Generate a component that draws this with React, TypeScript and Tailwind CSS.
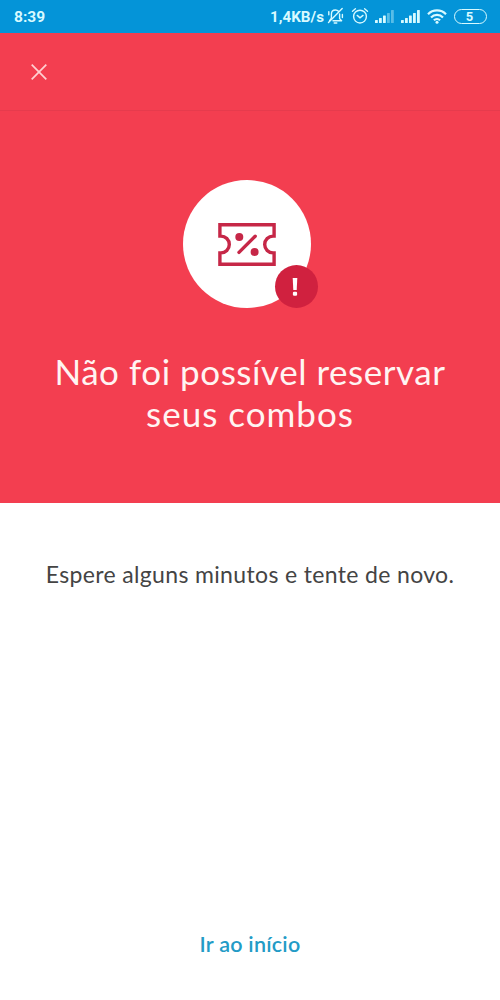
import type { ReactNode } from "react";

const signalBars = [
  { x: 0, height: 3 },
  { x: 4, height: 5 },
  { x: 8, height: 7.5 },
  { x: 12, height: 10 },
  { x: 16, height: 13 },
];

function BellOffIcon() {
  return (
    <svg
      viewBox="0 0 17 18"
      className="h-[18px] w-[17px]"
      fill="none"
      stroke="currentColor"
      strokeWidth="1.4"
      strokeLinecap="round"
      strokeLinejoin="round"
    >
      <path d="M4.4 11V7.2C4.4 4.6 6 3 8.4 3c1.3 0 2.4.5 3.1 1.3M12.6 7v4.6l2 2.2H6M2.6 13.6l1.8-2.4M7.2 16h2.6" />
      <path d="M15.2 1.6 1.5 15.4M1.8 4.6v3.2M15.4 7.5v3" />
    </svg>
  );
}

function AlarmIcon() {
  return (
    <svg
      viewBox="0 0 18 18"
      className="h-[18px] w-[18px]"
      fill="none"
      stroke="currentColor"
      strokeWidth="1.4"
      strokeLinecap="round"
    >
      <circle cx="9" cy="9.6" r="6.4" />
      <path d="M1.5 4.2 4.4 1.8M16.5 4.2l-2.9-2.4M6.2 8.4 9 10.8l3-2.4" />
    </svg>
  );
}

function SignalIcon({ strength }: { strength: number }) {
  return (
    <svg viewBox="0 0 19 13" className="h-[13px] w-[19px]" fill="currentColor">
      {signalBars.map((bar, index) => (
        <rect
          key={bar.x}
          x={bar.x}
          y={13 - bar.height}
          width="2.8"
          height={bar.height}
          rx="0.5"
          opacity={index < strength ? 1 : 0.4}
        />
      ))}
    </svg>
  );
}

function WifiIcon() {
  return (
    <svg
      viewBox="0 0 20 15"
      className="h-[15px] w-[20px]"
      fill="none"
      stroke="currentColor"
      strokeWidth="2.2"
    >
      <path d="M1 5.2a12.6 12.6 0 0 1 18 0M4 8.4a8.4 8.4 0 0 1 12 0M6.9 11.3a4.4 4.4 0 0 1 6.2 0" />
      <circle cx="10" cy="13.2" r="1.5" fill="currentColor" stroke="none" />
    </svg>
  );
}

function TicketIcon() {
  return (
    <svg
      viewBox="0 0 58 43"
      className="h-[43px] w-[58px]"
      fill="none"
      stroke="#c62747"
      strokeWidth="3.4"
    >
      <path d="M1.9 1.7h54.2v11.4h-1a8.4 8.4 0 0 0 0 16.8h1v11.4H1.9V29.9h1a8.4 8.4 0 0 0 0-16.8h-1z" />
      <path d="M21 29.4 37.2 13.2" strokeLinecap="round" />
      <circle cx="21.3" cy="14" r="4" fill="#c62747" stroke="none" />
      <circle cx="36.6" cy="29" r="4" fill="#c62747" stroke="none" />
    </svg>
  );
}

function StatusBar() {
  return (
    <div className="flex h-[33px] items-center bg-[#0494d8] pr-[13px] pl-3.5 font-['Roboto',sans-serif] text-[#d8faff]">
      <span className="mt-0.5 text-[15.5px] font-bold">8:39</span>
      <div className="ml-auto flex items-center">
        <span className="mt-0.5 mr-[3px] text-[15.2px] font-bold">1,4KB/s</span>
        <BellOffIcon />
        <span className="ml-[7px]">
          <AlarmIcon />
        </span>
        <span className="ml-1.5">
          <SignalIcon strength={3} />
        </span>
        <span className="ml-[7px]">
          <SignalIcon strength={5} />
        </span>
        <span className="ml-[7px]">
          <WifiIcon />
        </span>
        <span className="ml-[7px] flex h-[15px] w-[33px] items-center justify-center rounded-full border-[1.5px] border-current pr-0.5 text-[13px] leading-none font-bold">
          5
        </span>
      </div>
    </div>
  );
}

function Badge({ children }: { children: ReactNode }) {
  return (
    <div className="relative flex size-32 items-center justify-center rounded-full bg-white">
      {children}
      <span className="absolute top-[85px] left-[92px] flex size-[43px] items-center justify-center rounded-full bg-[#d0213f]">
        <svg
          viewBox="0 0 6 18"
          className="mr-[3px] h-[18px] w-[6px]"
          fill="#fff"
        >
          <path d="M.7 0h4.6l-.6 12H1.3z" />
          <rect x=".9" y="13.8" width="4.2" height="4" rx="1.2" />
        </svg>
      </span>
    </div>
  );
}

export default function App() {
  return (
    <div className="flex h-[1000px] w-[500px] flex-col overflow-hidden bg-white font-['Lato',sans-serif]">
      <StatusBar />
      <header className="flex h-[78px] items-center border-b border-[#e63b4d] bg-[#f33e50] pl-[31px]">
        <button type="button" aria-label="Fechar">
          <svg
            viewBox="0 0 16 16"
            className="size-4"
            fill="none"
            stroke="#ffd0d2"
            strokeWidth="1.7"
          >
            <path d="m.7.7 14.6 14.6M15.3.7.7 15.3" />
          </svg>
        </button>
      </header>
      <section className="flex h-[392px] flex-col items-center bg-[#f33e50] pt-[69px]">
        <div className="mr-[7px]">
          <Badge>
            <TicketIcon />
          </Badge>
        </div>
        <h1 className="mt-[42px] text-center text-[35px] leading-[42px] tracking-[0.55px] whitespace-nowrap text-[#fff4f2]">
          Não foi possível reservar
          <br />
          <span className="tracking-[1px]">seus combos</span>
        </h1>
      </section>
      <main className="flex flex-1 flex-col items-center">
        <p className="mt-[56px] text-[23px] leading-[30px] tracking-[0.35px] whitespace-nowrap text-[#444444]">
          Espere alguns minutos e tente de novo.
        </p>
        <button
          type="button"
          className="mt-auto mb-[41px] text-[21.5px] leading-[30px] font-semibold tracking-[0.25px] text-[#239bc6]"
        >
          Ir ao início
        </button>
      </main>
    </div>
  );
}
